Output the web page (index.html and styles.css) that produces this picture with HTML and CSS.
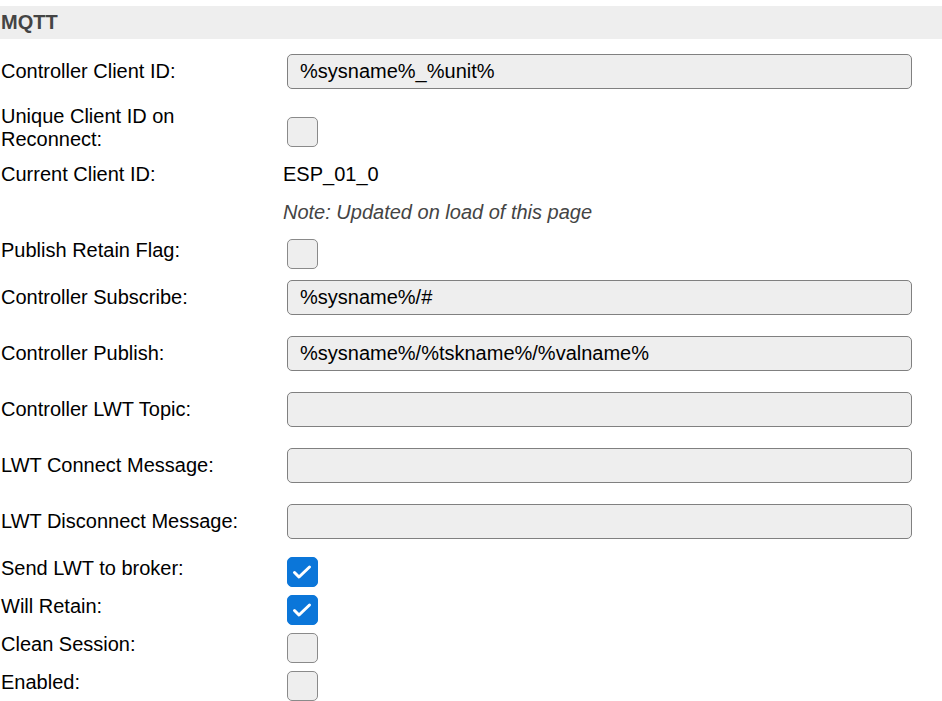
FILE: index.html
```html
<!DOCTYPE html>
<html>
<head>
<meta charset="utf-8">
<link rel="stylesheet" href="styles.css">
</head>
<body>
<div class="form">
  <div class="section">MQTT</div>

  <div class="row r-first">
    <div class="label">Controller Client ID:</div>
    <div class="ctl"><input class="txt" type="text" value="%sysname%_%unit%"></div>
  </div>

  <div class="row r-wrap">
    <div class="label">Unique Client ID on Reconnect:</div>
    <div class="ctl"><span class="cb"></span></div>
  </div>

  <div class="row r-text">
    <div class="label">Current Client ID:</div>
    <div class="ctl plain">ESP_01_0</div>
  </div>

  <div class="row r-note">
    <div class="label"></div>
    <div class="ctl note">Note: Updated on load of this page</div>
  </div>

  <div class="row r-cb">
    <div class="label">Publish Retain Flag:</div>
    <div class="ctl"><span class="cb"></span></div>
  </div>

  <div class="row r-in">
    <div class="label">Controller Subscribe:</div>
    <div class="ctl"><input class="txt" type="text" value="%sysname%/#"></div>
  </div>

  <div class="row r-in">
    <div class="label">Controller Publish:</div>
    <div class="ctl"><input class="txt" type="text" value="%sysname%/%tskname%/%valname%"></div>
  </div>

  <div class="row r-in">
    <div class="label">Controller LWT Topic:</div>
    <div class="ctl"><input class="txt" type="text" value=""></div>
  </div>

  <div class="row r-in">
    <div class="label">LWT Connect Message:</div>
    <div class="ctl"><input class="txt" type="text" value=""></div>
  </div>

  <div class="row r-in">
    <div class="label">LWT Disconnect Message:</div>
    <div class="ctl"><input class="txt" type="text" value=""></div>
  </div>

  <div class="row r-cb">
    <div class="label">Send LWT to broker:</div>
    <div class="ctl"><span class="cb checked"><svg width="30" height="30" viewBox="0 0 30 30"><path d="M7.5 15.5 L12 20 L22.5 10" fill="none" stroke="#fff" stroke-width="3" stroke-linecap="round" stroke-linejoin="round"/></svg></span></div>
  </div>

  <div class="row r-cb">
    <div class="label">Will Retain:</div>
    <div class="ctl"><span class="cb checked"><svg width="30" height="30" viewBox="0 0 30 30"><path d="M7.5 15.5 L12 20 L22.5 10" fill="none" stroke="#fff" stroke-width="3" stroke-linecap="round" stroke-linejoin="round"/></svg></span></div>
  </div>

  <div class="row r-cb">
    <div class="label">Clean Session:</div>
    <div class="ctl"><span class="cb"></span></div>
  </div>

  <div class="row r-cb">
    <div class="label">Enabled:</div>
    <div class="ctl"><span class="cb"></span></div>
  </div>
</div>
</body>
</html>
```

FILE: styles.css
```css
html, body {
  margin: 0;
  padding: 0;
  background: #fff;
}

body {
  font-family: "Liberation Sans", Arial, sans-serif;
  font-size: 20px;
  line-height: 23px;
  color: #000;
  overflow: hidden;
}

.form {
  padding-top: 6px;
}

.section {
  height: 33px;
  background: #eeeeee;
  color: #444;
  font-weight: bold;
  font-size: 20px;
  line-height: 33px;
  padding-left: 1px;
}

.row {
  display: grid;
  grid-template-columns: 283px 1fr;
  align-items: center;
}

.label {
  padding-left: 1px;
  padding-right: 7px;
}

.ctl {
  display: flex;
  align-items: center;
}

.r-first { height: 65px; }
.r-wrap  { height: 47px; }
.r-text  { height: 46px; }
.r-note  { height: 30px; padding-bottom: 4px; }
.r-cb    { height: 38px; }
.r-in    { height: 56px; }

.plain {
  color: #000;
}

.note {
  font-style: italic;
  color: #444;
}

.txt {
  box-sizing: border-box;
  width: 625px;
  height: 35px;
  margin: 0 0 0 4px;
  padding: 0 12px;
  border: 1px solid #808080;
  border-radius: 5px;
  background: #eeeeee;
  font-family: "Liberation Sans", Arial, sans-serif;
  font-size: 20px;
  color: #000;
  outline: none;
}

.cb {
  box-sizing: border-box;
  display: block;
  width: 31px;
  height: 30px;
  margin: 8px 0 0 4px;
  border: 1px solid #8a8a8a;
  border-radius: 5px;
  background: #eeeeee;
}

.cb.checked {
  background: #0b76d9;
  border-color: #0b76d9;
}

.cb svg {
  display: block;
  margin: -1px;
}
```
